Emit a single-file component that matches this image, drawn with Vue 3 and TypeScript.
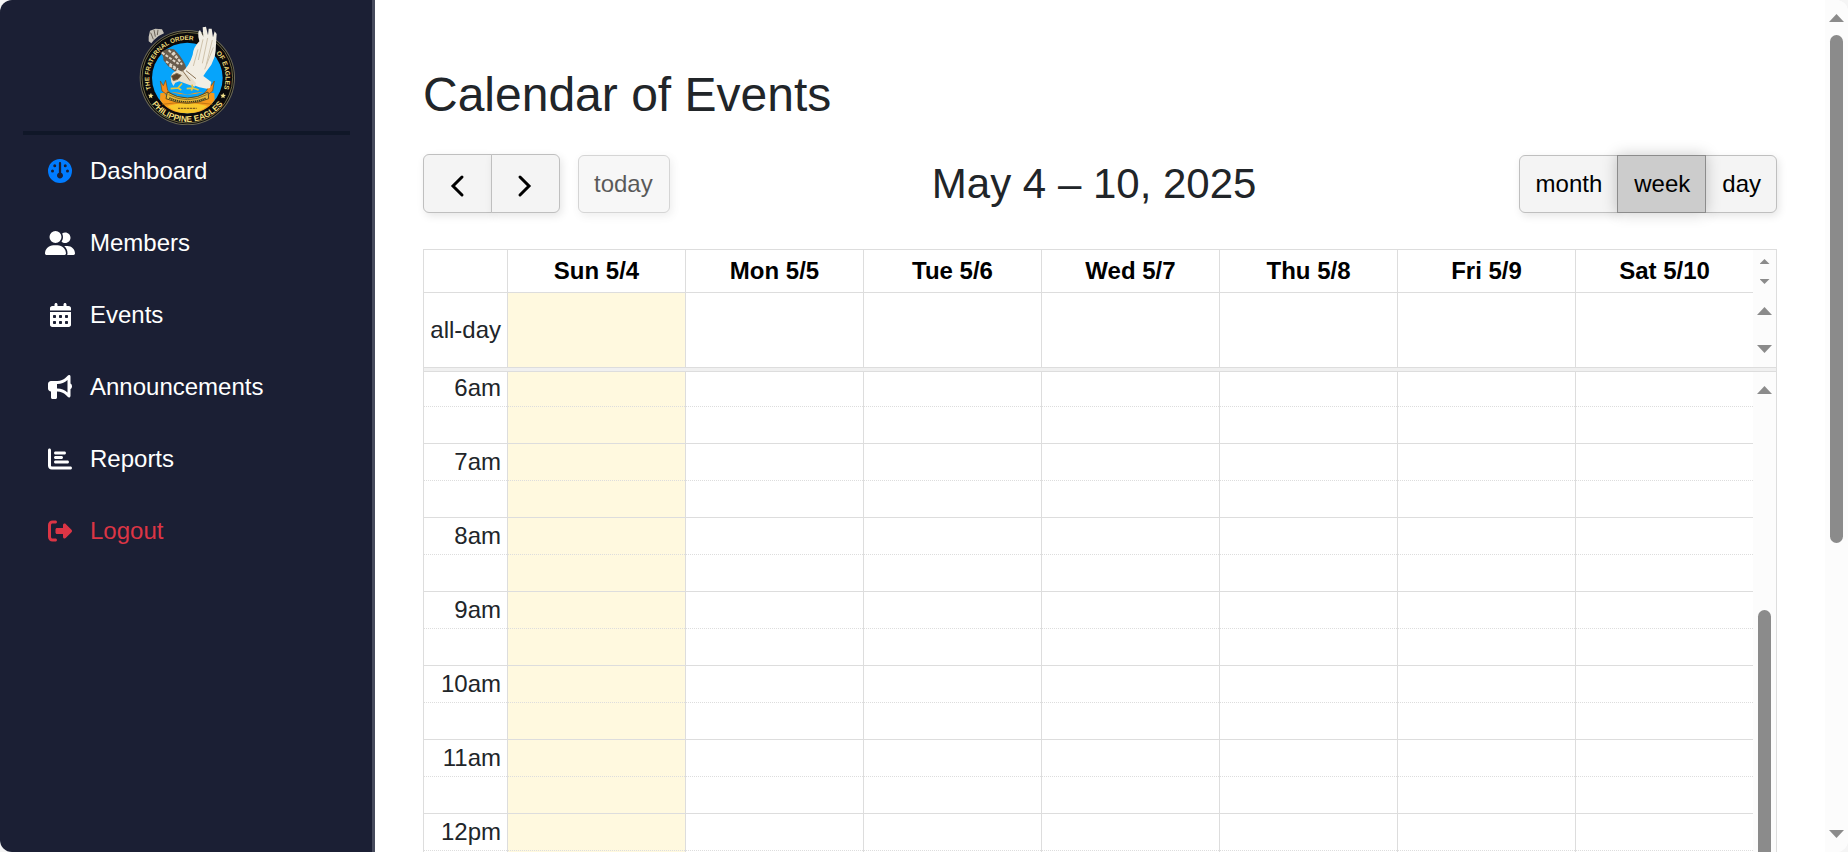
<script setup lang="ts">
import { ref } from 'vue'

interface NavItem {
  label: string
  tone: string
  width: number
  path: string
}

const navItems: NavItem[] = [
  {
    label: 'Dashboard',
    tone: 'active',
    width: 512,
    path: 'M0 256a256 256 0 1 1 512 0A256 256 0 1 1 0 256zM256 416c35.3 0 64-28.7 64-64c0-26.9-16.5-49.9-40-59.3V88c0-13.3-10.7-24-24-24s-24 10.7-24 24V292.7c-23.5 9.5-40 32.5-40 59.3c0 35.3 28.7 64 64 64zM144 176a32 32 0 1 0 0-64 32 32 0 1 0 0 64zm-16 80a32 32 0 1 0 -64 0 32 32 0 1 0 64 0zm288 32a32 32 0 1 0 0-64 32 32 0 1 0 0 64zM400 144a32 32 0 1 0 -64 0 32 32 0 1 0 64 0z',
  },
  {
    label: 'Members',
    tone: 'plain',
    width: 640,
    path: 'M96 128a128 128 0 1 1 256 0A128 128 0 1 1 96 128zM0 482.3C0 383.8 79.8 304 178.3 304h91.4C368.2 304 448 383.8 448 482.3c0 16.4-13.3 29.7-29.7 29.7H29.7C13.3 512 0 498.7 0 482.3zM609.3 512H471.4c5.4-9.4 8.6-20.3 8.6-32v-8c0-60.7-27.1-115.2-69.8-151.8c2.4-.1 4.7-.2 7.1-.2h61.4C567.8 320 640 392.2 640 481.3c0 17-13.8 30.7-30.7 30.7zM432 256c-31 0-59-12.6-79.3-32.9C372.4 196.5 384 163.6 384 128c0-26.8-6.6-52.1-18.3-74.3C384.3 40.1 407.2 32 432 32c61.9 0 112 50.1 112 112s-50.1 112-112 112z',
  },
  {
    label: 'Events',
    tone: 'plain',
    width: 448,
    path: 'M128 0c17.7 0 32 14.3 32 32V64H288V32c0-17.7 14.3-32 32-32s32 14.3 32 32V64h48c26.5 0 48 21.5 48 48v48H0V112C0 85.5 21.5 64 48 64H96V32c0-17.7 14.3-32 32-32zM0 192H448V464c0 26.5-21.5 48-48 48H48c-26.5 0-48-21.5-48-48V192zM80 256a16 16 0 0 0-16 16v32a16 16 0 0 0 16 16h32a16 16 0 0 0 16-16v-32a16 16 0 0 0-16-16zM208 256a16 16 0 0 0-16 16v32a16 16 0 0 0 16 16h32a16 16 0 0 0 16-16v-32a16 16 0 0 0-16-16zM336 256a16 16 0 0 0-16 16v32a16 16 0 0 0 16 16h32a16 16 0 0 0 16-16v-32a16 16 0 0 0-16-16zM80 384a16 16 0 0 0-16 16v32a16 16 0 0 0 16 16h32a16 16 0 0 0 16-16v-32a16 16 0 0 0-16-16zM208 384a16 16 0 0 0-16 16v32a16 16 0 0 0 16 16h32a16 16 0 0 0 16-16v-32a16 16 0 0 0-16-16zM336 384a16 16 0 0 0-16 16v32a16 16 0 0 0 16 16h32a16 16 0 0 0 16-16v-32a16 16 0 0 0-16-16z',
  },
  {
    label: 'Announcements',
    tone: 'plain',
    width: 512,
    path: 'M480 32c0-12.9-7.8-24.6-19.8-29.6s-25.7-2.2-34.9 6.9L381.7 53c-48 48-113.1 75-181 75H192 160 64c-35.3 0-64 28.7-64 64v96c0 35.3 28.7 64 64 64l0 128c0 17.7 14.3 32 32 32h64c17.7 0 32-14.3 32-32V352l8.7 0c67.9 0 133 27 181 75l43.6 43.6c9.2 9.2 22.9 11.9 34.9 6.9s19.8-16.6 19.8-29.6V300.4c18.6-8.8 32-32.5 32-60.4s-13.4-51.6-32-60.4V32zm-64 76.7V240 371.3C357.2 317.8 280.5 288 200.7 288H192V192h8.7c79.8 0 156.5-29.8 215.3-83.3z',
  },
  {
    label: 'Reports',
    tone: 'plain',
    width: 512,
    path: 'M32 32c17.7 0 32 14.3 32 32V400c0 8.8 7.2 16 16 16H480c17.7 0 32 14.3 32 32s-14.3 32-32 32H80c-44.2 0-80-35.8-80-80V64C0 46.3 14.3 32 32 32zm96 96c0-17.7 14.3-32 32-32l192 0c17.7 0 32 14.3 32 32s-14.3 32-32 32H160c-17.7 0-32-14.3-32-32zm32 64H288c17.7 0 32 14.3 32 32s-14.3 32-32 32H160c-17.7 0-32-14.3-32-32s14.3-32 32-32zm0 96H416c17.7 0 32 14.3 32 32s-14.3 32-32 32H160c-17.7 0-32-14.3-32-32s14.3-32 32-32z',
  },
  {
    label: 'Logout',
    tone: 'danger',
    width: 512,
    path: 'M377.9 105.9L500.7 228.7c7.2 7.2 11.3 17.1 11.3 27.3s-4.1 20.1-11.3 27.3L377.9 406.1c-6.4 6.4-15 9.9-24 9.9c-18.7 0-33.9-15.2-33.9-33.9l0-62.1-128 0c-17.7 0-32-14.3-32-32l0-64c0-17.7 14.3-32 32-32l128 0 0-62.1c0-18.7 15.2-33.9 33.9-33.9c9 0 17.6 3.6 24 9.9zM160 96L96 96c-17.7 0-32 14.3-32 32l0 256c0 17.7 14.3 32 32 32l64 0c17.7 0 32 14.3 32 32s-14.3 32-32 32l-64 0c-53 0-96-43-96-96L0 128C0 75 43 32 96 32l64 0c17.7 0 32 14.3 32 32s-14.3 32-32 32z',
  },
]

const views = ['month', 'week', 'day']
const activeView = ref('week')

const days = ['Sun 5/4', 'Mon 5/5', 'Tue 5/6', 'Wed 5/7', 'Thu 5/8', 'Fri 5/9', 'Sat 5/10']
const hours = ['6am', '7am', '8am', '9am', '10am', '11am', '12pm']
</script>

<template>
  <div class="app">
    <aside class="sidebar">
      <svg class="logo" viewBox="46 31 300 300" role="img" aria-label="Philippine Eagles">
        <defs>
          <path id="arc-start" d="M91 224A114 114 0 0 1 200 76A114 114 0 0 1 260 93" />
          <path id="arc-end" d="M286 115A114 114 0 0 1 308 228A114 114 0 0 1 300 244" />
          <path id="arc-bottom" d="M68 190A132 132 0 0 0 332 190" />
        </defs>
        <circle cx="200" cy="189" r="143" fill="#6d6a55" />
        <circle cx="200" cy="189" r="140" fill="#0a0a0c" />
        <circle cx="200" cy="189" r="136" fill="none" stroke="#a59a5c" stroke-width="2" />
        <circle cx="200" cy="190" r="106" fill="#06a4fb" />
        <path d="M119 236Q160 226 200 240Q240 226 281 236L282 256Q256 296 200 296Q144 296 118 256z" fill="#f79a1c" />
        <path d="M128 222Q150 236 200 240Q250 236 272 222L262 250Q200 262 138 250z" fill="#06a4fb" />
        <path d="M140 274Q200 256 260 274Q236 296 200 296Q164 296 140 274z" fill="#f8c92c" />
        <path d="M119 199l9 14 7-16 6 30 16 16-8 5-25-19zM281 199l-9 14-7-16-6 30-16 16 8 5 25-19z" fill="#f78d1d" stroke="#7a4a12" stroke-width="2" />
        <path d="M140 232Q200 268 262 232L264 252Q200 280 136 252z" fill="#e8b93a" stroke="#5c4a1d" stroke-width="3" />
        <path d="M144 240Q200 270 258 240" fill="none" stroke="#5c4a1d" stroke-width="2" />
        <path d="M146 250Q200 274 256 250" fill="none" stroke="#3a3a20" stroke-width="5" stroke-dasharray="4 2" />
        <path d="M172 281h56" stroke="#85611a" stroke-width="4" stroke-dasharray="7 2" />
        <path d="M124 269Q200 258 276 269" fill="none" stroke="#a8660f" stroke-width="2" />
        <g class="ring-text">
          <text font-size="19"><textPath href="#arc-start">THE FRATERNAL ORDER</textPath></text>
          <text font-size="20"><textPath href="#arc-end">OF EAGLES</textPath></text>
          <text font-size="25" text-anchor="middle"><textPath href="#arc-bottom" startOffset="50%">PHILIPPINE EAGLES</textPath></text>
        </g>
        <path d="M91 234l2 6 6 1-5 4 1 6-5-3-5 3 1-6-4-5 6 0zM308 234l2 6 6 1-5 4 1 6-5-3-5 3 1-6-4-5 6 0z" fill="#f2e08a" />
        <path d="M84 66L88 48 104 42 124 44 130 56 114 64 100 76 92 86 84 80z" fill="#c9c4ba" />
        <path d="M90 54l8 20M100 46l4 20M112 45l-2 16" stroke="#6b6259" stroke-width="3" />
        <path d="M119 114Q140 98 160 104Q178 120 194 150L200 178 180 182Q158 168 142 154Q134 144 128 136Q130 124 119 114z" fill="#685b4c" />
        <path d="M124 114l50 34M136 140l36 24M144 107l36 34M146 152l32 20M158 112l26 38" stroke="#ded6c8" stroke-width="6" stroke-dasharray="9 4" />
        <path d="M184 172Q206 154 216 120Q218 98 236 80Q228 50 238 46L248 66 246 38 256 36 262 62 264 42 273 42 277 68 282 50 288 58 286 88 285 108 282 126 272 150 256 172 248 184 272 202 268 220 258 222 236 218 204 206z" fill="#f2eee4" />
        <path d="M247 74l-14 62M261 70l-16 76M275 76l-18 74M278 98l-26 66M232 104l-14 50" stroke="#cfc3ac" stroke-width="3" fill="none" />
        <path d="M150 186Q158 166 178 168Q202 174 226 206L222 216Q196 208 176 200L164 204 158 214 152 202z" fill="#e8dfcd" />
        <path d="M152 184l16-8 14 6-10 12-14 4zM184 166l24 32M196 168l30 24" fill="#59422c" stroke="#8b7355" stroke-width="3" />
        <path d="M184 206l-12 14-22 2M172 220l10 6M214 210l2 10-18 2M216 220l18 6M216 220l-4 8" stroke="#e9c53b" stroke-width="5" fill="none" />
      </svg>
      <hr class="divider" />
      <nav class="menu">
        <a v-for="item in navItems" :key="item.label" href="#" class="menu-link" :class="item.tone">
          <span class="menu-icon">
            <svg :viewBox="`0 0 ${item.width} 512`" height="24" aria-hidden="true">
              <path :d="item.path" fill="currentColor" fill-rule="evenodd" />
            </svg>
          </span>
          <span>{{ item.label }}</span>
        </a>
      </nav>
    </aside>

    <main class="content">
      <h1>Calendar of Events</h1>

      <div class="toolbar">
        <div class="toolbar-part">
          <div class="button-group">
            <button type="button" class="btn arrow" aria-label="Previous week">
              <svg width="36" height="36" viewBox="0 0 36 36" aria-hidden="true"><path d="M22 11l-9 9 9 9" /></svg>
            </button>
            <button type="button" class="btn arrow" aria-label="Next week">
              <svg width="36" height="36" viewBox="0 0 36 36" aria-hidden="true"><path d="M12 11l9 9-9 9" /></svg>
            </button>
          </div>
          <button type="button" class="btn today-btn" disabled>today</button>
        </div>
        <h2>May 4 – 10, 2025</h2>
        <div class="button-group">
          <button
            v-for="view in views"
            :key="view"
            type="button"
            class="btn"
            :class="{ pressed: view === activeView }"
            :aria-pressed="view === activeView"
            @click="activeView = view"
          >{{ view }}</button>
        </div>
      </div>

      <section class="calendar">
        <div class="band">
          <table class="grid">
            <colgroup><col class="axis-col" /><col v-for="day in days" :key="day" /></colgroup>
            <thead>
              <tr class="head-row">
                <td></td>
                <th v-for="day in days" :key="day" scope="col">{{ day }}</th>
              </tr>
            </thead>
          </table>
          <div class="scrollbar tiny"><i class="up"></i><i class="down"></i></div>
        </div>
        <div class="band">
          <table class="grid">
            <colgroup><col class="axis-col" /><col v-for="day in days" :key="day" /></colgroup>
            <tbody>
              <tr class="all-day-row">
                <th class="axis" scope="row">all-day</th>
                <td v-for="(day, i) in days" :key="day" :class="{ today: i === 0 }"></td>
              </tr>
            </tbody>
          </table>
          <div class="scrollbar pair"><i class="up"></i><i class="down"></i></div>
        </div>
        <div class="separator"></div>
        <div class="band slots">
          <table class="grid scrolled">
            <colgroup><col class="axis-col" /><col v-for="day in days" :key="day" /></colgroup>
            <tbody v-for="hour in hours" :key="hour">
              <tr class="slot">
                <th class="axis" scope="row">{{ hour }}</th>
                <td v-for="(day, i) in days" :key="day" :class="{ today: i === 0 }"></td>
              </tr>
              <tr class="slot minor">
                <td class="axis"></td>
                <td v-for="(day, i) in days" :key="day" :class="{ today: i === 0 }"></td>
              </tr>
            </tbody>
          </table>
          <div class="scrollbar slots-bar">
            <i class="up"></i>
            <span class="thumb"></span>
          </div>
        </div>
      </section>
    </main>

    <div class="scrollbar page-bar">
      <i class="up"></i>
      <div class="track"><div class="thumb"></div></div>
      <i class="down"></i>
    </div>
  </div>
</template>

<style>
body {
  margin: 0;
  background: #f5f5f5;
}
</style>

<style scoped>
.app,
.app * {
  box-sizing: border-box;
}

.app {
  display: flex;
  height: 100vh;
  overflow: hidden;
  border-radius: 12px;
  background: #fff;
  color: #212529;
  font-family: 'Liberation Sans', Arial, sans-serif;
  font-size: 24px;
  line-height: 36px;
}

.sidebar {
  display: flex;
  flex: 0 0 375px;
  flex-direction: column;
  padding-top: 25px;
  border-right: 3px solid #464a5c;
  background: #1b1f34;
}

.logo {
  width: 100px;
  height: 100px;
  align-self: center;
}

.ring-text {
  fill: #f3de7c;
  font-weight: bold;
}

.divider {
  width: auto;
  height: 4px;
  margin: 6px 22px 0 23px;
  border: 0;
  background: #101728;
}

.menu-link {
  display: flex;
  align-items: center;
  gap: 15px;
  height: 72px;
  padding-left: 45px;
  color: #fff;
  text-decoration: none;
}

.menu-link.danger {
  color: #dc3545;
}

.menu-icon {
  display: flex;
  justify-content: center;
  width: 30px;
}

.menu-icon svg {
  display: block;
}

.active .menu-icon {
  color: #007bff;
}

.content {
  flex: 1;
  min-width: 0;
  padding: 66px 48px 0;
}

h1,
h2 {
  margin: 0;
  font-weight: 400;
}

h1 {
  margin-bottom: 30px;
  font-size: 48px;
  line-height: 58px;
}

h2 {
  font-size: 42px;
  line-height: 50px;
}

.toolbar {
  display: flex;
  align-items: center;
  justify-content: space-between;
  margin-bottom: 36px;
}

.toolbar-part {
  display: flex;
  align-items: center;
  gap: 18px;
}

.button-group {
  display: flex;
}

.btn {
  height: 58px;
  padding: 0 15px 0 16px;
  border: 1px solid #bfbfbf;
  border-radius: 0;
  background: #f4f4f4;
  box-shadow: 2px 3px 8px rgba(0, 0, 0, 0.1);
  color: #000;
  font: inherit;
}

.btn + .btn {
  margin-left: -1px;
}

.btn:first-child,
.today-btn {
  border-top-left-radius: 6px;
  border-bottom-left-radius: 6px;
}

.btn:last-child {
  border-top-right-radius: 6px;
  border-bottom-right-radius: 6px;
}

.btn.arrow {
  display: flex;
  align-items: center;
  justify-content: center;
  width: 69px;
  height: 59px;
  padding: 0;
}

.arrow path {
  fill: none;
  stroke: #000;
  stroke-width: 3;
  stroke-linecap: round;
}

.btn.today-btn {
  padding: 0 16px 0 15px;
  opacity: 0.65;
}

.btn.pressed {
  z-index: 1;
  border-color: #8c8c8c;
  background: #ccc;
  box-shadow: 0 0 14px rgba(0, 0, 0, 0.22);
}

.calendar {
  border: 1px solid #ddd;
}

.band {
  display: flex;
}

.grid {
  flex: 1;
  width: 100%;
  min-width: 0;
  border-collapse: separate;
  border-spacing: 0;
  table-layout: fixed;
}

.axis-col {
  width: 83px;
}

.grid th,
.grid td {
  padding: 0;
  border: 0 solid #ddd;
}

.grid th + th,
.grid td + th,
.grid th + td,
.grid td + td {
  border-left-width: 1px;
}

.head-row {
  height: 43px;
  color: #000;
}

.head-row > * {
  border-bottom-width: 1px !important;
}

.all-day-row {
  height: 74px;
}

.grid .axis {
  padding-right: 6px;
  font-weight: 400;
  text-align: right;
}

.today {
  background: #fff9df;
}

.separator {
  height: 5px;
  border: 1px solid #ddd;
  border-width: 1px 0;
  background: #f0f0f0;
}

.slots {
  overflow: hidden;
}

.scrolled {
  margin-top: -3px;
}

.slot {
  height: 37px;
}

.slot > * {
  border-top-width: 1px !important;
}

.minor > * {
  border-top-style: dotted !important;
}

.scrollbar {
  display: flex;
  flex: 0 0 23px;
  flex-direction: column;
  align-items: center;
  background: #fcfcfc;
}

.scrollbar i {
  width: 15px;
  height: 8px;
  background: #8b8b8b;
}

.up {
  clip-path: polygon(50% 0, 100% 100%, 0 100%);
}

.down {
  clip-path: polygon(0 0, 100% 0, 50% 100%);
}

.tiny {
  justify-content: space-between;
  padding: 9px 0;
}

.scrollbar.tiny i {
  width: 10px;
  height: 5px;
}

.pair {
  justify-content: space-between;
  padding: 14px 0;
}

.slots-bar {
  padding-top: 14px;
}

.thumb {
  width: 13px;
  border-radius: 7px;
  background: #8b8b8b;
}

.slots-bar .thumb {
  flex: 1;
  margin-top: 216px;
}

.page-bar {
  padding: 14px 0;
}

.track {
  flex: 1;
  padding: 13px 0;
}

.page-bar .thumb {
  height: 65%;
}
</style>
